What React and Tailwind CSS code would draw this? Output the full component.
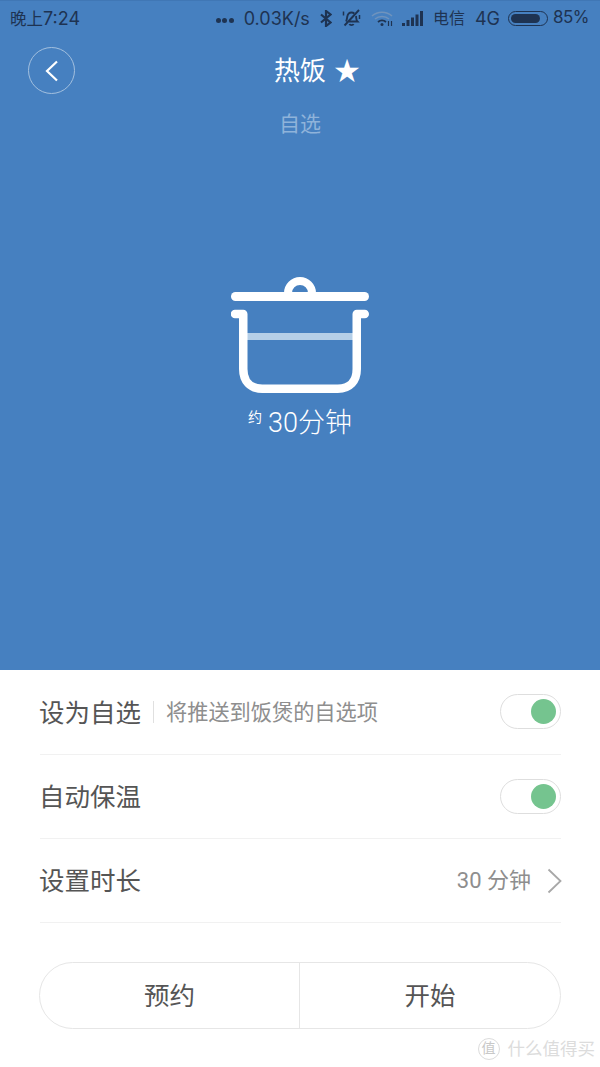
import React from 'react';

const cjk = { fontFamily: '"Roboto", "Noto Sans CJK SC", sans-serif' };
const statusFont = { fontFamily: '"Inter", "Noto Sans CJK SC", sans-serif' };

// status bar glyphs
const BluetoothIcon = () => (
    <svg width="12" height="17" viewBox="0 0 12 17" fill="none" stroke="#1e3352" strokeWidth="2.2">
        <path d="M1 4.5l9.5 8L6 16V1l4.5 3.5L1 12.5" />
    </svg>
);

const BellOffIcon = () => (
    <svg width="19" height="18" viewBox="0 0 19 18" fill="none" stroke="#1e3352" strokeWidth="1.9">
        <path d="M4 12.5c1-1.5 1-3.5 1.3-5C5.8 5 7.5 3.5 9.5 3.5c1 0 2 .3 2.8 1M14 7c.3 2 0 4 1.5 5.5H7" />
        <path d="M7.5 15c.5 1.5 3.500 1.5 4 0" />
        <path d="M1.5 2.5v4M17.5 6v4" strokeWidth="1.5" />
        <path d="M2.5 16.5L17 1" />
    </svg>
);

const WifiIcon = () => (
    <svg width="22" height="16" viewBox="0 0 22 16" fill="none">
        <path d="M1 6c5.5-5 14.5-5 20 0" stroke="#6f93bd" strokeWidth="1.5" />
        <path d="M4 9c3.8-3.3 10.2-3.3 14 0" stroke="#6f93bd" strokeWidth="1.5" />
        <path d="M7 12c2.3-2 5.7-2 8 0" stroke="#1e3352" strokeWidth="1.8" />
        <path d="M17.5 11v5M20.5 11v5" stroke="#1e3352" strokeWidth="1.2" />
        <circle cx="11" cy="14.5" r="1.5" fill="#1e3352" />
    </svg>
);

const SignalIcon = () => (
    <svg width="21" height="15" viewBox="0 0 21 15" fill="#1e3352">
        <rect x="0" y="12" width="3" height="3" />
        <rect x="4.5" y="9" width="3" height="6" />
        <rect x="9" y="6.5" width="3" height="8.5" />
        <rect x="13.5" y="3.5" width="3" height="11.5" />
        <rect x="18" y="0" width="3" height="15" />
    </svg>
);

const PotIcon = () => (
    <svg width="138" height="117" viewBox="0 0 138 117" fill="none" className="block">
        {/* knob */}
        <path d="M57 16a12 12 0 0 1 24 0" stroke="#fff" strokeWidth="8" />
        {/* lid */}
        <path d="M4.5 19.5h129" stroke="#fff" strokeWidth="9" strokeLinecap="round" />
        {/* water line */}
        <path d="M16 59.5h106" stroke="#b5cfe8" strokeWidth="7" />
        {/* body */}
        <path
            d="M4 37h8.25v55c0 12 7 19.75 19 19.75h75.5c12 0 19-7.75 19-19.75V37h8"
            stroke="#fff"
            strokeWidth="8.5"
            strokeLinecap="round"
            strokeLinejoin="round"
        />
    </svg>
);

const Toggle = () => (
    <div className="w-[61px] h-[35px] rounded-full border border-[#dedede] bg-white flex items-center justify-end pr-[4px]">
        <div className="w-[25px] h-[25px] rounded-full bg-[#75c48f]" />
    </div>
);

const ChevronRight = () => (
    <svg width="15" height="26" viewBox="0 0 15 26" fill="none" stroke="#a8a8a8" strokeWidth="1.8">
        <path d="M1.5 1.5L13.5 13 1.5 24.5" />
    </svg>
);

const App = () => {
    return (
        <div className="relative w-[600px] h-[1067px] overflow-hidden bg-white" style={cjk}>
            {/* top panel */}
            <div className="h-[670px] bg-[#4680c0] flex flex-col">
                <div
                    className="h-[35px] pl-[10px] pr-[11px] border-t border-[#4077b5] flex items-center justify-between text-[#1e3352] text-[18px]"
                    style={statusFont}
                >
                    <span><span className="text-[16.5px]">晚上</span>7:24</span>
                    <div className="flex items-center">
                        <span className="flex gap-[1.5px] mr-[10px] mt-[4px]">
                            <span className="w-[5px] h-[5px] rounded-full bg-[#1e3352]" />
                            <span className="w-[5px] h-[5px] rounded-full bg-[#1e3352]" />
                            <span className="w-[5px] h-[5px] rounded-full bg-[#1e3352]" />
                        </span>
                        <span className="mr-[10px]">0.03K/s</span>
                        <span className="mr-[10px] flex"><BluetoothIcon /></span>
                        <span className="mr-[10px] flex"><BellOffIcon /></span>
                        <span className="mr-[9px] flex"><WifiIcon /></span>
                        <span className="mr-[10px] flex"><SignalIcon /></span>
                        <span className="mr-[10px] text-[16px]">电信</span>
                        <span className="mr-[8px]">4G</span>
                        <div className="mr-[5px] w-[40px] h-[15px] rounded-full border border-[#1e3352] p-[2px]">
                            <div className="w-[85%] h-full rounded-full bg-[#1e3352]" />
                        </div>
                        <span className="text-[17px] tracking-[-0.5px]">85%</span>
                    </div>
                </div>

                <div className="mt-[12px] px-[28px] grid grid-cols-[1fr_auto_1fr] items-center">
                    <button className="w-[47px] h-[47px] rounded-full border border-[#a3c0df] flex items-center justify-center">
                        <svg width="14" height="22" viewBox="0 0 14 22" fill="none" stroke="#fff" strokeWidth="2.2">
                            <path d="M12 1.5L2 11l10 9.5" />
                        </svg>
                    </button>
                    <h1 className="relative pt-[2px] text-[26px] leading-[45px] text-white">
                        热饭
                        <span className="absolute left-[60px] top-[2px] text-[26px]">★</span>
                    </h1>
                    <div />
                </div>

                <p className="mt-[15px] text-center text-[21px] leading-[30px] text-[#8fb3da]">自选</p>

                <div className="mt-[138px] flex justify-center">
                    <PotIcon />
                </div>

                <div className="mt-[10px] flex justify-center text-white">
                    <span className="text-[14px] leading-[20px] mr-[6px] mt-[3px]">约</span>
                    <span className="text-[27px] leading-[38px] font-light">30分钟</span>
                </div>
            </div>

            {/* settings */}
            <div className="pl-[40px] pr-[39px]">
                <div className="h-[85px] pb-[1px] border-b border-[#f1f1f1] flex items-center justify-between">
                    <div className="flex items-center -ml-[1px]">
                        <span className="text-[25.5px] text-[#555555] pt-[3px]">设为自选</span>
                        <span className="w-px h-[22px] bg-[#e0e0e0] ml-[12px] mr-[12px]" />
                        <span className="text-[21.2px] text-[#8e8e8e] pt-[3px]">将推送到饭煲的自选项</span>
                    </div>
                    <Toggle />
                </div>
                <div className="h-[84px] border-b border-[#f1f1f1] flex items-center justify-between">
                    <span className="text-[25.5px] text-[#555555] pt-[2px] -ml-[1px]">自动保温</span>
                    <Toggle />
                </div>
                <div className="h-[84px] border-b border-[#f1f1f1] flex items-center justify-between">
                    <span className="text-[25.5px] text-[#555555] pt-[2px] -ml-[1px]">设置时长</span>
                    <div className="flex items-center -mr-[1px]">
                        <span className="text-[22px] text-[#8e8e8e] mr-[16px]">30 分钟</span>
                        <ChevronRight />
                    </div>
                </div>
            </div>

            {/* actions */}
            <div className="mt-[39px] mx-[39px] h-[67px] rounded-full border border-[#e6e6e6] flex text-[25.5px] text-[#555555]">
                <button className="w-[260px] border-r border-[#e6e6e6] pt-[2px]">预约</button>
                <button className="flex-1 pt-[2px]">开始</button>
            </div>

            {/* site mark in the corner */}
            <div className="absolute right-[5px] bottom-[5px] flex items-center text-[#dcdcdc]">
                <span className="w-[22px] h-[22px] rounded-full border border-[#dcdcdc] flex items-center justify-center text-[14px] text-[#c8c8c8] mr-[8px]">值</span>
                <span className="text-[17.5px]">什么值得买</span>
            </div>
        </div>
    );
};

export default App;
